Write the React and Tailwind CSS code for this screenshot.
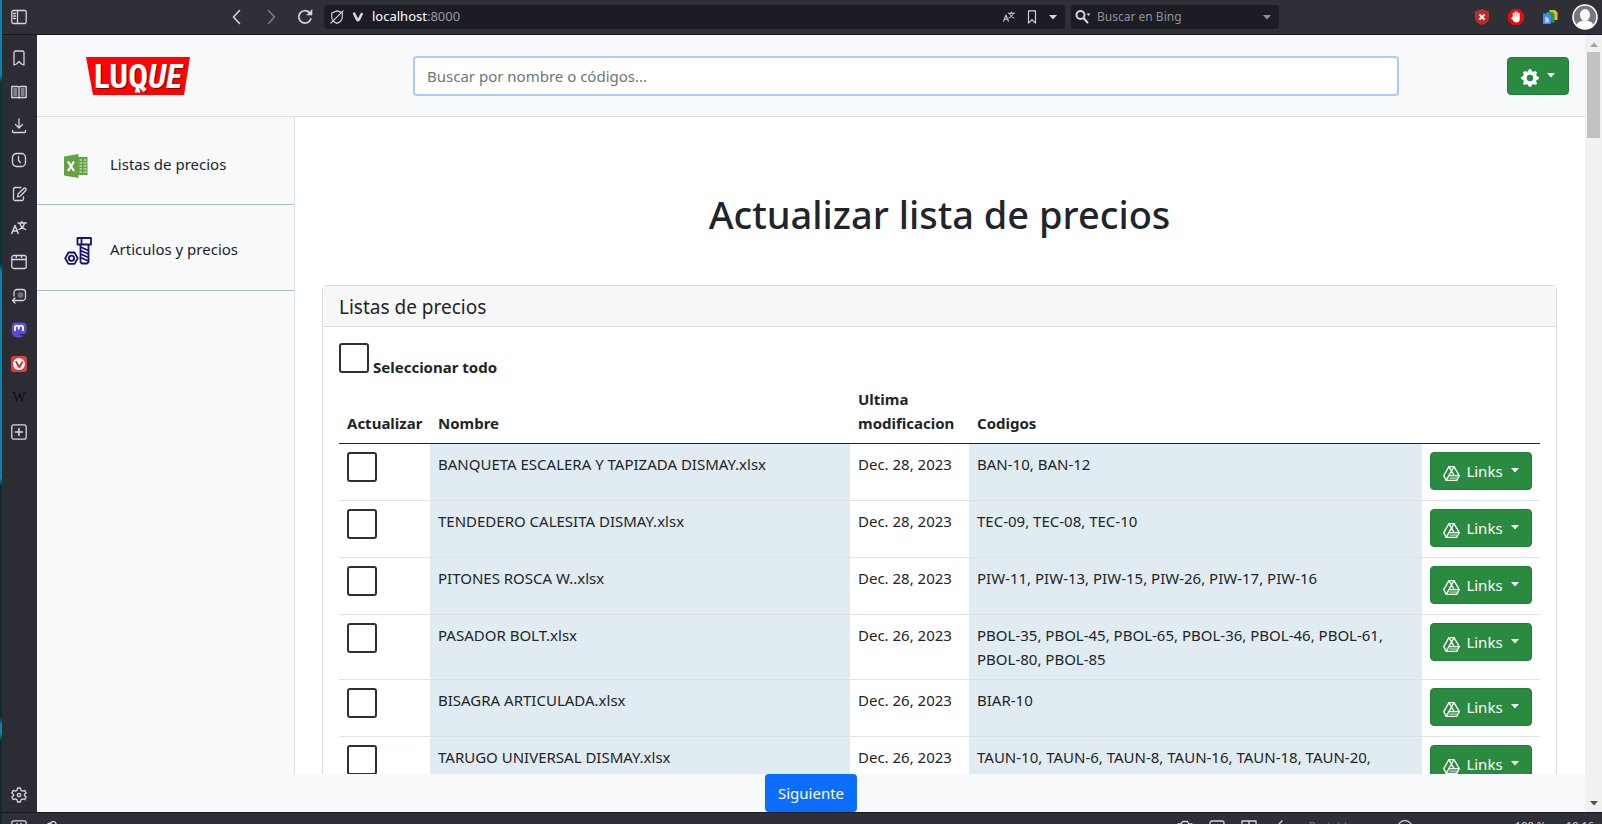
import React from "react";
import { BsGearFill } from "react-icons/bs";

const rows = [
  { name: "BANQUETA ESCALERA Y TAPIZADA DISMAY.xlsx", date: "Dec. 28, 2023", codes: "BAN-10, BAN-12" },
  { name: "TENDEDERO CALESITA DISMAY.xlsx", date: "Dec. 28, 2023", codes: "TEC-09, TEC-08, TEC-10" },
  { name: "PITONES ROSCA W..xlsx", date: "Dec. 28, 2023", codes: "PIW-11, PIW-13, PIW-15, PIW-26, PIW-17, PIW-16" },
  { name: "PASADOR BOLT.xlsx", date: "Dec. 26, 2023", codes: "PBOL-35, PBOL-45, PBOL-65, PBOL-36, PBOL-46, PBOL-61, PBOL-80, PBOL-85" },
  { name: "BISAGRA ARTICULADA.xlsx", date: "Dec. 26, 2023", codes: "BIAR-10" },
  { name: "TARUGO UNIVERSAL DISMAY.xlsx", date: "Dec. 26, 2023", codes: "TAUN-10, TAUN-6, TAUN-8, TAUN-16, TAUN-18, TAUN-20," },
];

function Line({ children, className = "size-4", ...rest }) {
  return (
    <svg
      viewBox="0 0 16 16"
      className={className}
      fill="none"
      stroke="currentColor"
      strokeWidth="1.3"
      strokeLinecap="round"
      strokeLinejoin="round"
      aria-hidden="true"
      {...rest}
    >
      {children}
    </svg>
  );
}

const TranslateIcon = ({ className }) => (
  <Line className={className}>
    <path d="M.8 13.5 4 5.5l3.200 8M1.900 11h4.200" strokeWidth="1.500" />
    <path d="M7 3h8.300M11 1.300V3M13.500 3c-.6 3-2.800 5.300-5.700 6.500M8.800 3.200c.8 2.800 2.700 5 5.900 6.300" />
  </Line>
);

const PanelIcon = () => (
  <Line>
    <rect x=".8" y="1.500" width="14.400" height="13" rx="1.500" />
    <path d="M6.500 1.500v13M2.500 4.500h2M2.500 7h2M2.500 9.500h2" />
  </Line>
);

const CaretDown = ({ className }) => (
  <svg viewBox="0 0 8 5" className={className} aria-hidden="true">
    <path d="M0 0h8L4 4.500z" fill="currentColor" />
  </svg>
);

const DriveIcon = () => (
  <Line className="mt-1 size-[17px]" strokeWidth="1.200">
    <path d="M5.600 1.500h4.800L15.300 10l-2.400 4.500H3.100L.7 10z" />
    <path d="M10.400 1.500 5.500 10l-2.400 4.500M5.600 1.500 8 5.700l2.500 4.300M15.300 10H5.500" />
    <path d="M6.500 12.300h6.500" strokeWidth=".8" />
  </Line>
);

const sideIcons = [
  { label: "Marcadores", icon: <Line><path d="M3 2.500A1.500 1.500 0 0 1 4.500 1h7A1.500 1.500 0 0 1 13 2.500V15l-2.500-1L8 11.500 5.500 14 3 15z" /></Line> },
  {
    label: "Lista de lectura",
    icon: (
      <Line>
        <path d="M.8 2.500h6L8 3.200l1.200-.7h6v11h-6L8 14.300l-1.200-.8h-6zM8 3.200v11" />
        <path d="M2.800 5h3M2.800 7h3M2.800 9h3M2.800 11h3M10.200 5h3M10.200 7h3M10.200 9h3M10.200 11h3" strokeWidth="1" />
      </Line>
    ),
  },
  { label: "Descargas", icon: <Line><path d="M8 1v8.500M4.500 6.500 8 10l3.500-3.500M1.500 12.500v1.200c0 .5.300.8.800.8h11.400c.5 0 .8-.3.800-.8v-1.200" /></Line> },
  { label: "Historial", icon: <Line><rect x="1.500" y="1.500" width="13" height="13" rx="4" /><path d="M7.500 4.500v4l2 2" /></Line> },
  { label: "Notas", icon: <Line><path d="M10 1.500H4A1.500 1.500 0 0 0 2.500 3v10A1.500 1.500 0 0 0 4 14.500h7a1.500 1.500 0 0 0 1.500-1.500v-2" /><path d="m6.500 11 .7-3.200 5.500-5.300c1.400-1.200 3.200.5 2 2L9.500 10z" /></Line> },
  { label: "Traductor", icon: <TranslateIcon className="size-4" /> },
  { label: "Ventanas", icon: <Line><rect x=".8" y="1.500" width="14.400" height="13" rx="2" /><path d="M.8 5.500h14.400M5.300 1.500v2M10.600 1.500v2" /></Line> },
  {
    label: "Sesiones",
    icon: (
      <Line>
        <circle cx="9.500" cy="7" r="3" fill="#6d6e78" stroke="none" />
        <path d="M3 8V4.500a3 3 0 0 1 3-3h5.500a3 3 0 0 1 3 3v5a3 3 0 0 1-3 3H2M4 10l-2.500 2.500L4 15" />
      </Line>
    ),
  },
  {
    label: "Mastodon",
    icon: (
      <svg viewBox="0 0 16 16" className="size-4" aria-hidden="true">
        <path d="M4 .5h8.500C14.500.8 15.500 2 15.500 4v4.500c0 2-1.200 3.300-3 3.500-2 .3-4 .3-5.500 0 .3 1.500 2.500 1.700 4.500 1.200v1.500C7.500 16.300 1.500 16 .7 10V4C.7 2 2 .7 4 .5z" fill="#5a4be0" />
        <path d="M4 9V5.500C4 3 7.700 3 7.700 5.500V7.500 5.500C7.700 3 12 3 12 5.500V9" fill="none" stroke="#fff" strokeWidth="1.800" />
      </svg>
    ),
  },
  {
    label: "Vivaldi",
    icon: (
      <svg viewBox="0 0 16 16" className="size-4" aria-hidden="true">
        <rect width="16" height="16" rx="3" fill="#e23b3b" />
        <circle cx="8" cy="8" r="6" fill="#fff" />
        <path d="m5.200 5.800 2.500 4.700c.3.500.9.500 1.200 0l2.300-4.300" fill="none" stroke="#d92f2f" strokeWidth="2" strokeLinecap="round" />
      </svg>
    ),
  },
  { label: "Wikipedia", icon: <span className="font-['Liberation_Serif',serif] text-sm leading-4 text-[#0d0d10]">W</span> },
  { label: "Agregar panel", icon: <Line><rect x=".8" y=".8" width="14.400" height="14.400" rx="2" /><path d="M8 4.500v7M4.500 8h7" strokeWidth="1.600" /></Line> },
];

function TopBar() {
  return (
    <div className="flex h-[35px] shrink-0 items-center border-b border-[#18181f] bg-[#2f2f38] text-[#d3d6e0]">
      <button aria-label="Panel lateral" className="flex w-[34px] justify-center"><PanelIcon /></button>
      <div className="ml-[193px] flex items-center gap-[18px]">
        <button aria-label="Atrás"><Line strokeWidth="1.600"><path d="M10.500 1.500 4.500 8l6 6.500" /></Line></button>
        <button aria-label="Adelante" className="text-[#7c7d87]"><Line strokeWidth="1.600"><path d="m5.500 1.500 6 6.500-6 6.500" /></Line></button>
        <button aria-label="Recargar">
          <Line strokeWidth="1.700"><path d="M13.800 10A6.200 6.200 0 1 1 12.500 3.700" /><path d="M15 1v5h-5z" fill="currentColor" stroke="currentColor" strokeWidth=".6" /></Line>
        </button>
      </div>
      <div className="ml-[11px] flex h-6 grow items-center rounded bg-[#1c1c25] pl-1.5 text-[13px]">
        <Line className="size-3.5"><path d="M2 3.500 8 1l6 2v5c0 3.500-2.500 6-6 7.300C4.500 14 2 11.500 2 8zM1 15 15 1" /></Line>
        <svg viewBox="0 0 14 14" className="ml-2 size-3" aria-hidden="true">
          <path d="M2.500 3 6 10c.5 1 1.600 1 2 0l3.300-6.500" fill="none" stroke="currentColor" strokeWidth="3" strokeLinecap="round" />
        </svg>
        <span className="ml-2 text-[#9799a4]"><span className="text-white">localhost</span>:8000</span>
        <div className="ml-auto flex items-center gap-2.5 pr-2">
          <TranslateIcon className="size-3" />
          <Line className="size-3.5"><path d="M4 1h8v14l-4-4-4 4z" /></Line>
          <CaretDown className="w-2" />
        </div>
      </div>
      <label className="ml-1.5 flex h-6 w-[208px] items-center gap-1.5 rounded bg-[#1c1c25] pr-2 pl-1">
        <Line className="h-4 w-4 shrink-0" strokeWidth="2"><circle cx="5.500" cy="6" r="4" /><path d="m8.500 9 4 4.500" /><path d="M11.500 4.500h4L13.500 7z" fill="currentColor" stroke="none" /></Line>
        <input aria-label="Buscar en Bing" placeholder="Buscar en Bing" className="w-full min-w-0 bg-transparent text-[12px] outline-none placeholder:text-[#8f919c]" />
        <CaretDown className="w-2 shrink-0 text-[#8f919c]" />
      </label>
      <div className="ml-[195px] flex items-center gap-[18px] pr-1">
        <svg viewBox="0 0 16 16" className="size-4" aria-hidden="true">
          <path d="m8 0 7 2.500V9c0 3.500-3.500 6-7 7-3.500-1-7-3.500-7-7V2.500z" fill="#bd2c2c" />
          <path d="m5.500 5.500 5 5m0-5-5 5" stroke="#fff" strokeWidth="1.800" />
        </svg>
        <svg viewBox="0 0 16 16" className="size-4" aria-hidden="true">
          <path d="M4.700 0h6.600L16 4.700v6.600L11.300 16H4.700L0 11.300V4.700z" fill="#e60d0d" />
          <path d="M5.500 9V4.500M7.300 8V3M9.100 8V3.200M10.900 9V4.500" stroke="#fff" strokeWidth="1.500" strokeLinecap="round" />
          <path d="M4.800 7.500h6.800V11c0 3-5.200 3.300-6.500.5L3 9z" fill="#fff" />
        </svg>
        <svg viewBox="0 0 16 16" className="size-4" aria-hidden="true">
          <path d="M7.500 1h5.500l2.500 2.500V11h-8z" fill="#f7b51c" />
          <path d="M4.500 3h6l2 2v8.500h-8z" fill="#18a05a" />
          <path d="M1 4.500h5l3 3V15H1z" fill="#4a86f2" />
          <path d="M3 8h2l2 2v3.500H3z" fill="#b7d0fb" />
        </svg>
        <svg viewBox="0 0 26 26" className="-ml-1 size-[26px]" role="img" aria-label="Perfil">
          <circle cx="13" cy="13" r="12" fill="#77787c" stroke="#fff" strokeWidth="1.600" />
          <ellipse cx="13" cy="11" rx="5" ry="6" fill="#fff" />
          <path d="M4.500 21c1-3 4.500-4.500 8.500-4.500s7.500 1.500 8.500 4.500c-2 2.600-5 4-8.500 4s-6.500-1.400-8.500-4z" fill="#fff" />
        </svg>
      </div>
    </div>
  );
}

function SideRail() {
  return (
    <nav className="flex w-[35px] shrink-0 flex-col items-center bg-[#2c2c34] pt-[15px] pr-px pb-[9px] text-[#d3d6e0]">
      <div className="flex flex-col gap-[18px]">
        {sideIcons.map(({ label, icon }) => (
          <button key={label} aria-label={label} className="flex size-4 items-center justify-center">{icon}</button>
        ))}
      </div>
      <button aria-label="Configuración" className="mt-auto">
        <Line><path d="M6.600 1h2.800l.5 2.200 1.600.9 2.200-.7 1.400 2.500-1.700 1.500v1.200l1.700 1.500-1.400 2.500-2.200-.7-1.600.9-.5 2.200H6.600l-.5-2.200-1.600-.9-2.200.7-1.400-2.500 1.700-1.500V7.400L.9 5.900l1.400-2.500 2.200.7 1.600-.9z" /><circle cx="8" cy="8" r="1.700" /></Line>
      </button>
    </nav>
  );
}

function Logo() {
  return (
    <svg viewBox="0 0 104 38" className="h-[38px] w-[104px]" role="img" aria-label="Luque">
      <path d="M0 0h104l-6 38H7z" fill="#fb0404" />
      <text
        x="52"
        y="31"
        textAnchor="middle"
        fill="#ffffff"
        fontFamily="'Roboto Condensed','Open Sans Condensed','Noto Sans Condensed','Liberation Sans',sans-serif"
        fontWeight="700"
        fontSize="33"
        className="[text-shadow:1px_1px_0_#8c0000]"
      >
        LUQ<tspan fontStyle="italic">UE</tspan>
      </text>
      <path d="m51.500 26 3 9.500h-6z" fill="#ffffff" />
    </svg>
  );
}

const ExcelIcon = () => (
  <svg viewBox="0 0 24 24" className="size-6" aria-hidden="true">
    <path d="M14 3h9.500v18H14z" fill="#63a345" />
    <path d="M15.500 6h2.500M19.500 6h3M15.500 9h2.500M19.500 9h3M15.500 12h2.500M19.500 12h3M15.500 15h2.500M19.500 15h3M15.500 18h2.500M19.500 18h3" stroke="#e5f0df" strokeWidth="1.200" />
    <path d="M0 2.500 14.500 0v24L0 21.500z" fill="#63a345" />
    <path d="m4 7.500 6 9.500M10 7.500 4 17" stroke="#fff" strokeWidth="2.200" />
  </svg>
);

const BoltIcon = () => (
  <svg viewBox="0 0 28 28" className="size-7" fill="none" stroke="#14146e" strokeWidth="1.800" strokeLinejoin="round" aria-hidden="true">
    <path d="M13.500 1h13.500v6.500H13.500zM17.500 1v6.500M16.500 7.500h8V25l-1.500 1.500h-5L16.500 25z" />
    <path d="m16.500 10 8 3.500M16.500 13.500l8 3.500M16.500 17l8 3.500M16.500 20.500l8 3.500" />
    <path d="M4.500 15.500h6l3.200 5.700-3.200 5.700h-6L1.200 21.200z" />
    <circle cx="7.500" cy="21.200" r="2.600" />
  </svg>
);

function Header() {
  return (
    <header className="flex h-[82px] shrink-0 items-center border-b border-[#dcdee0] bg-[#f8f9fb] pr-4 pl-[49px]">
      <a href="#inicio" aria-label="Inicio"><Logo /></a>
      <input
        type="search"
        aria-label="Buscar"
        placeholder="Buscar por nombre o códigos..."
        className="ml-[223px] h-10 min-w-0 grow rounded border-2 border-[#a9cafb] bg-white px-3 text-[15px] text-[#212529] outline-none placeholder:text-[#6c757d]"
      />
      <button aria-label="Opciones" className="ml-[108px] flex h-[38px] w-[62px] items-center justify-center gap-2 rounded border border-[#1f7f38] bg-[#2a8a3f] text-white">
        <BsGearFill className="mt-1 size-[18px]" />
        <CaretDown className="w-2" />
      </button>
    </header>
  );
}

function Checkbox({ label, id }) {
  return (
    <input
      id={id}
      type="checkbox"
      aria-label={label}
      className="block size-[30px] appearance-none rounded-[3px] border-2 border-[#2f2f31] bg-white checked:bg-[#0d6efd]"
    />
  );
}

function PriceTable() {
  return (
    <table className="w-full table-fixed border-collapse text-[15px] leading-6 text-[#212529]">
      <colgroup>
        <col className="w-[91px]" />
        <col />
        <col className="w-[119px]" />
        <col className="w-[453px]" />
        <col className="w-[118px]" />
      </colgroup>
      <thead>
        <tr className="border-b border-[#212529] text-left align-bottom">
          <th className="p-2">Actualizar</th>
          <th className="p-2">Nombre</th>
          <th className="p-2">Ultima modificacion</th>
          <th className="p-2">Codigos</th>
          <td className="p-2" />
        </tr>
      </thead>
      <tbody>
        {rows.map((r) => (
          <tr key={r.name} className="h-[57px] border-b border-[#dee2e6] align-top">
            <td className="p-2"><Checkbox label={"Actualizar " + r.name} /></td>
            <td className="bg-[#e1ecf2] p-2">{r.name}</td>
            <td className="p-2 whitespace-nowrap">{r.date}</td>
            <td className="bg-[#e1ecf2] p-2">{r.codes}</td>
            <td className="p-2">
              <button className="flex h-[38px] w-full items-center justify-center gap-1.5 rounded border border-[#1f7f38] bg-[#2a8a3f] text-[15px] text-white">
                <DriveIcon />
                Links
                <CaretDown className="mb-0.5 ml-0.5 w-2" />
              </button>
            </td>
          </tr>
        ))}
      </tbody>
    </table>
  );
}

function SideLink({ icon, children, className }) {
  return (
    <a href="#seccion" className={"flex items-center border-b border-[#a5c6ae] pl-[27px] text-[15px] text-[#212529] " + className}>
      <span className="flex w-[46px] pt-0.5">{icon}</span>
      {children}
    </a>
  );
}

function StatusBar() {
  return (
    <footer className="flex h-3 shrink-0 items-start overflow-hidden border-t border-[#18181f] bg-[#2f2f38] pt-[7px] text-[11px] leading-3 text-[#d3d6e0]">
      <div className="flex gap-[18px] pl-[9px]">
        <Line className="size-4 shrink-0"><rect x=".8" y=".8" width="14.400" height="14" rx="2" /><path d="M6 3.500v4M10 3.500v4" /></Line>
        <Line className="size-4 shrink-0"><path d="M2 6c0-2 2-3 4-3 0-2 5-2 5 1M6 3v5" /></Line>
      </div>
      <div className="ml-auto flex pr-2">
        <Line className="mr-4 size-4 shrink-0"><path d="M1 4h3l1.500-2.500h5L12 4h3v9H1z" /></Line>
        <Line className="mr-4 size-4 shrink-0"><rect x="1" y="1" width="14" height="13" rx="2" /></Line>
        <Line className="mr-5 size-4 shrink-0"><path d="M1 1h14v13H1zM8 1v13" /></Line>
        <Line className="mr-4 size-4 shrink-0"><path d="M5 1 1 5l4 4" /></Line>
        <span className="text-[#7c7d87]">Restablecer</span>
        <Line className="ml-7 size-4 shrink-0"><circle cx="8" cy="8" r="7.300" /></Line>
        <span className="ml-[102px]">100 %</span>
        <span className="ml-5">10:16</span>
      </div>
    </footer>
  );
}

export default function App() {
  return (
    <div className="flex h-screen overflow-hidden bg-[#2c2c34] font-['Noto_Sans','Open_Sans',sans-serif]">
      <div className="w-0.5 shrink-0 bg-[linear-gradient(#0089ad_0_9%,#04363e_10%_32%,#0089ad_33%_58%,#0e2a30_59%_87%,#0089ad_88%_89%,#0e2a30_90%)]" />
      <div className="flex min-w-0 grow flex-col">
        <TopBar />
        <div className="flex min-h-0 grow">
          <SideRail />
          <div className="flex min-w-0 grow flex-col bg-[#f8f9fb]">
            <Header />
            <div className="flex min-h-0 grow">
              <aside className="w-[258px] shrink-0 border-r border-[#dcdee0]">
                <SideLink icon={<ExcelIcon />} className="h-[88px] pt-2">Listas de precios</SideLink>
                <SideLink icon={<BoltIcon />} className="h-[86px] pt-1">Articulos y precios</SideLink>
              </aside>
              <main className="min-w-0 grow overflow-hidden bg-white pr-7 pl-[27px]">
                <h1 className="pt-[73px] text-center text-[38px] leading-12 font-medium text-[#212529]">Actualizar lista de precios</h1>
                <section className="mt-[47px] rounded border border-[#dcdee0]">
                  <h2 className="border-b border-[#dcdee0] bg-[#f7f7f7] px-4 pt-[9px] pb-[7px] text-[19px] leading-6 text-[#212529]">Listas de precios</h2>
                  <div className="p-4">
                    <div className="flex items-end gap-1">
                      <Checkbox id="todo" />
                      <label htmlFor="todo" className="-mb-1.5 text-[15px] leading-6 font-bold text-[#212529]">Seleccionar todo</label>
                    </div>
                    <div className="pt-1.5"><PriceTable /></div>
                  </div>
                </section>
              </main>
            </div>
            <div className="flex shrink-0 justify-center">
              <button className="h-[38px] rounded bg-[#0d6efd] px-[13px] text-[15px] text-white">Siguiente</button>
            </div>
          </div>
          <div aria-hidden="true" className="flex w-[17px] shrink-0 flex-col items-center bg-[#f1f1f1] pt-[7px] pb-1.5">
            <CaretDown className="w-2 rotate-180 text-[#a3a3a3]" />
            <div className="mt-[5px] h-[86px] w-[13px] bg-[#c1c1c1]" />
            <CaretDown className="mt-auto w-2 text-[#505050]" />
          </div>
        </div>
        <StatusBar />
      </div>
    </div>
  );
}
